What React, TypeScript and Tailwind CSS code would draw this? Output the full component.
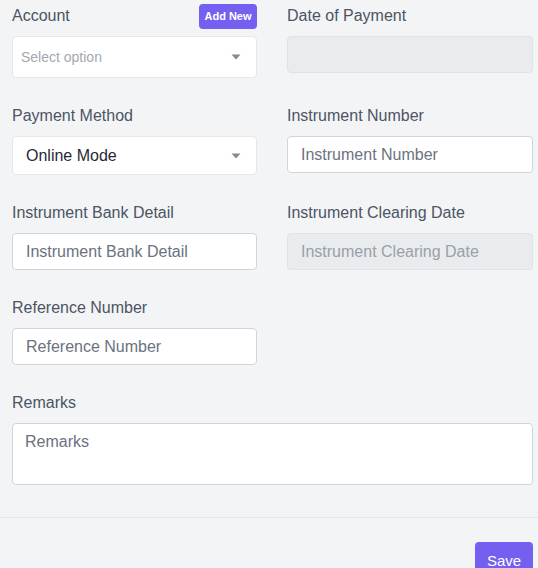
import React from "react";

const font = { fontFamily: '"Liberation Sans", Arial, sans-serif' };

function Caret() {
  return (
    <svg width="10" height="6" viewBox="0 0 10 6" className="shrink-0">
      <path d="M0.5 0.5 L9.5 0.5 L5 5.5 Z" fill="#8a8a8a" />
    </svg>
  );
}

function Label({ children }: { children: React.ReactNode }) {
  return <div className="h-[25px] pt-px leading-6 text-[16px] text-[#4b5563] mb-[8px]">{children}</div>;
}

function TextInput({ placeholder, disabled }: { placeholder: string; disabled?: boolean }) {
  return (
    <div
      className={`h-[37px] rounded-[4px] border flex items-center px-[13px] text-[16px] ${
        disabled ? "bg-[#e9ecef] border-[#dfe2e6] text-[#9aa0a6]" : "bg-white border-[#d1d5db] text-[#6b7280]"
      }`}
    >
      {placeholder}
    </div>
  );
}

export default function App() {
  return (
    <div className="w-[538px] h-[568px] bg-[#f3f4f6] overflow-hidden" style={font}>
      <div className="pl-3 pr-[5px] pt-1">
        <div className="grid grid-cols-[245px_246px] gap-x-[30px] gap-y-[25px] items-start">
          {/* Account */}
          <div>
            <div className="h-[25px] mb-[7px] flex items-center justify-between">
              <span className="text-[16px] text-[#4b5563] -mt-px">Account</span>
              <button className="h-[25px] w-[58px] rounded-[4px] bg-[#7360f0] text-white text-[11px] font-bold">
                Add New
              </button>
            </div>
            <div className="h-[42px] rounded-[4px] border border-[#e5e7eb] bg-white flex items-center justify-between pl-2 pr-[15px]">
              <span className="text-[14px] text-[#a3a8b0]">Select option</span>
              <Caret />
            </div>
          </div>
          {/* Date of Payment */}
          <div>
            <div className="h-[25px] mb-[7px] flex items-center">
              <span className="text-[16px] text-[#4b5563] -mt-px">Date of Payment</span>
            </div>
            <div className="h-[37px] rounded-[4px] border border-[#dfe2e6] bg-[#e9ecef]" />
          </div>

          {/* Payment Method */}
          <div>
            <Label>Payment Method</Label>
            <div className="h-[39px] rounded-[4px] border border-[#e5e7eb] bg-white flex items-center justify-between pl-[13px] pr-[15px]">
              <span className="text-[16px] text-[#1f2937]">Online Mode</span>
              <Caret />
            </div>
          </div>
          <div>
            <Label>Instrument Number</Label>
            <TextInput placeholder="Instrument Number" />
          </div>

          <div>
            <Label>Instrument Bank Detail</Label>
            <TextInput placeholder="Instrument Bank Detail" />
          </div>
          <div>
            <Label>Instrument Clearing Date</Label>
            <TextInput placeholder="Instrument Clearing Date" disabled />
          </div>

          <div>
            <Label>Reference Number</Label>
            <TextInput placeholder="Reference Number" />
          </div>
          <div />

          <div className="col-span-2">
            <Label>Remarks</Label>
            <div className="h-[62px] rounded-[4px] border border-[#d1d5db] bg-white px-3 pt-[6px] text-[16px] text-[#6b7280]">
              Remarks
            </div>
          </div>
        </div>
      </div>
      <div className="mt-[32px] border-t border-[#e3e5e8]" />
      <div className="flex justify-end pr-[5px] pt-[24px]">
        <button className="h-[38px] w-[58px] rounded-[4px] bg-[#7360f0] text-white text-[15px]">Save</button>
      </div>
    </div>
  );
}
